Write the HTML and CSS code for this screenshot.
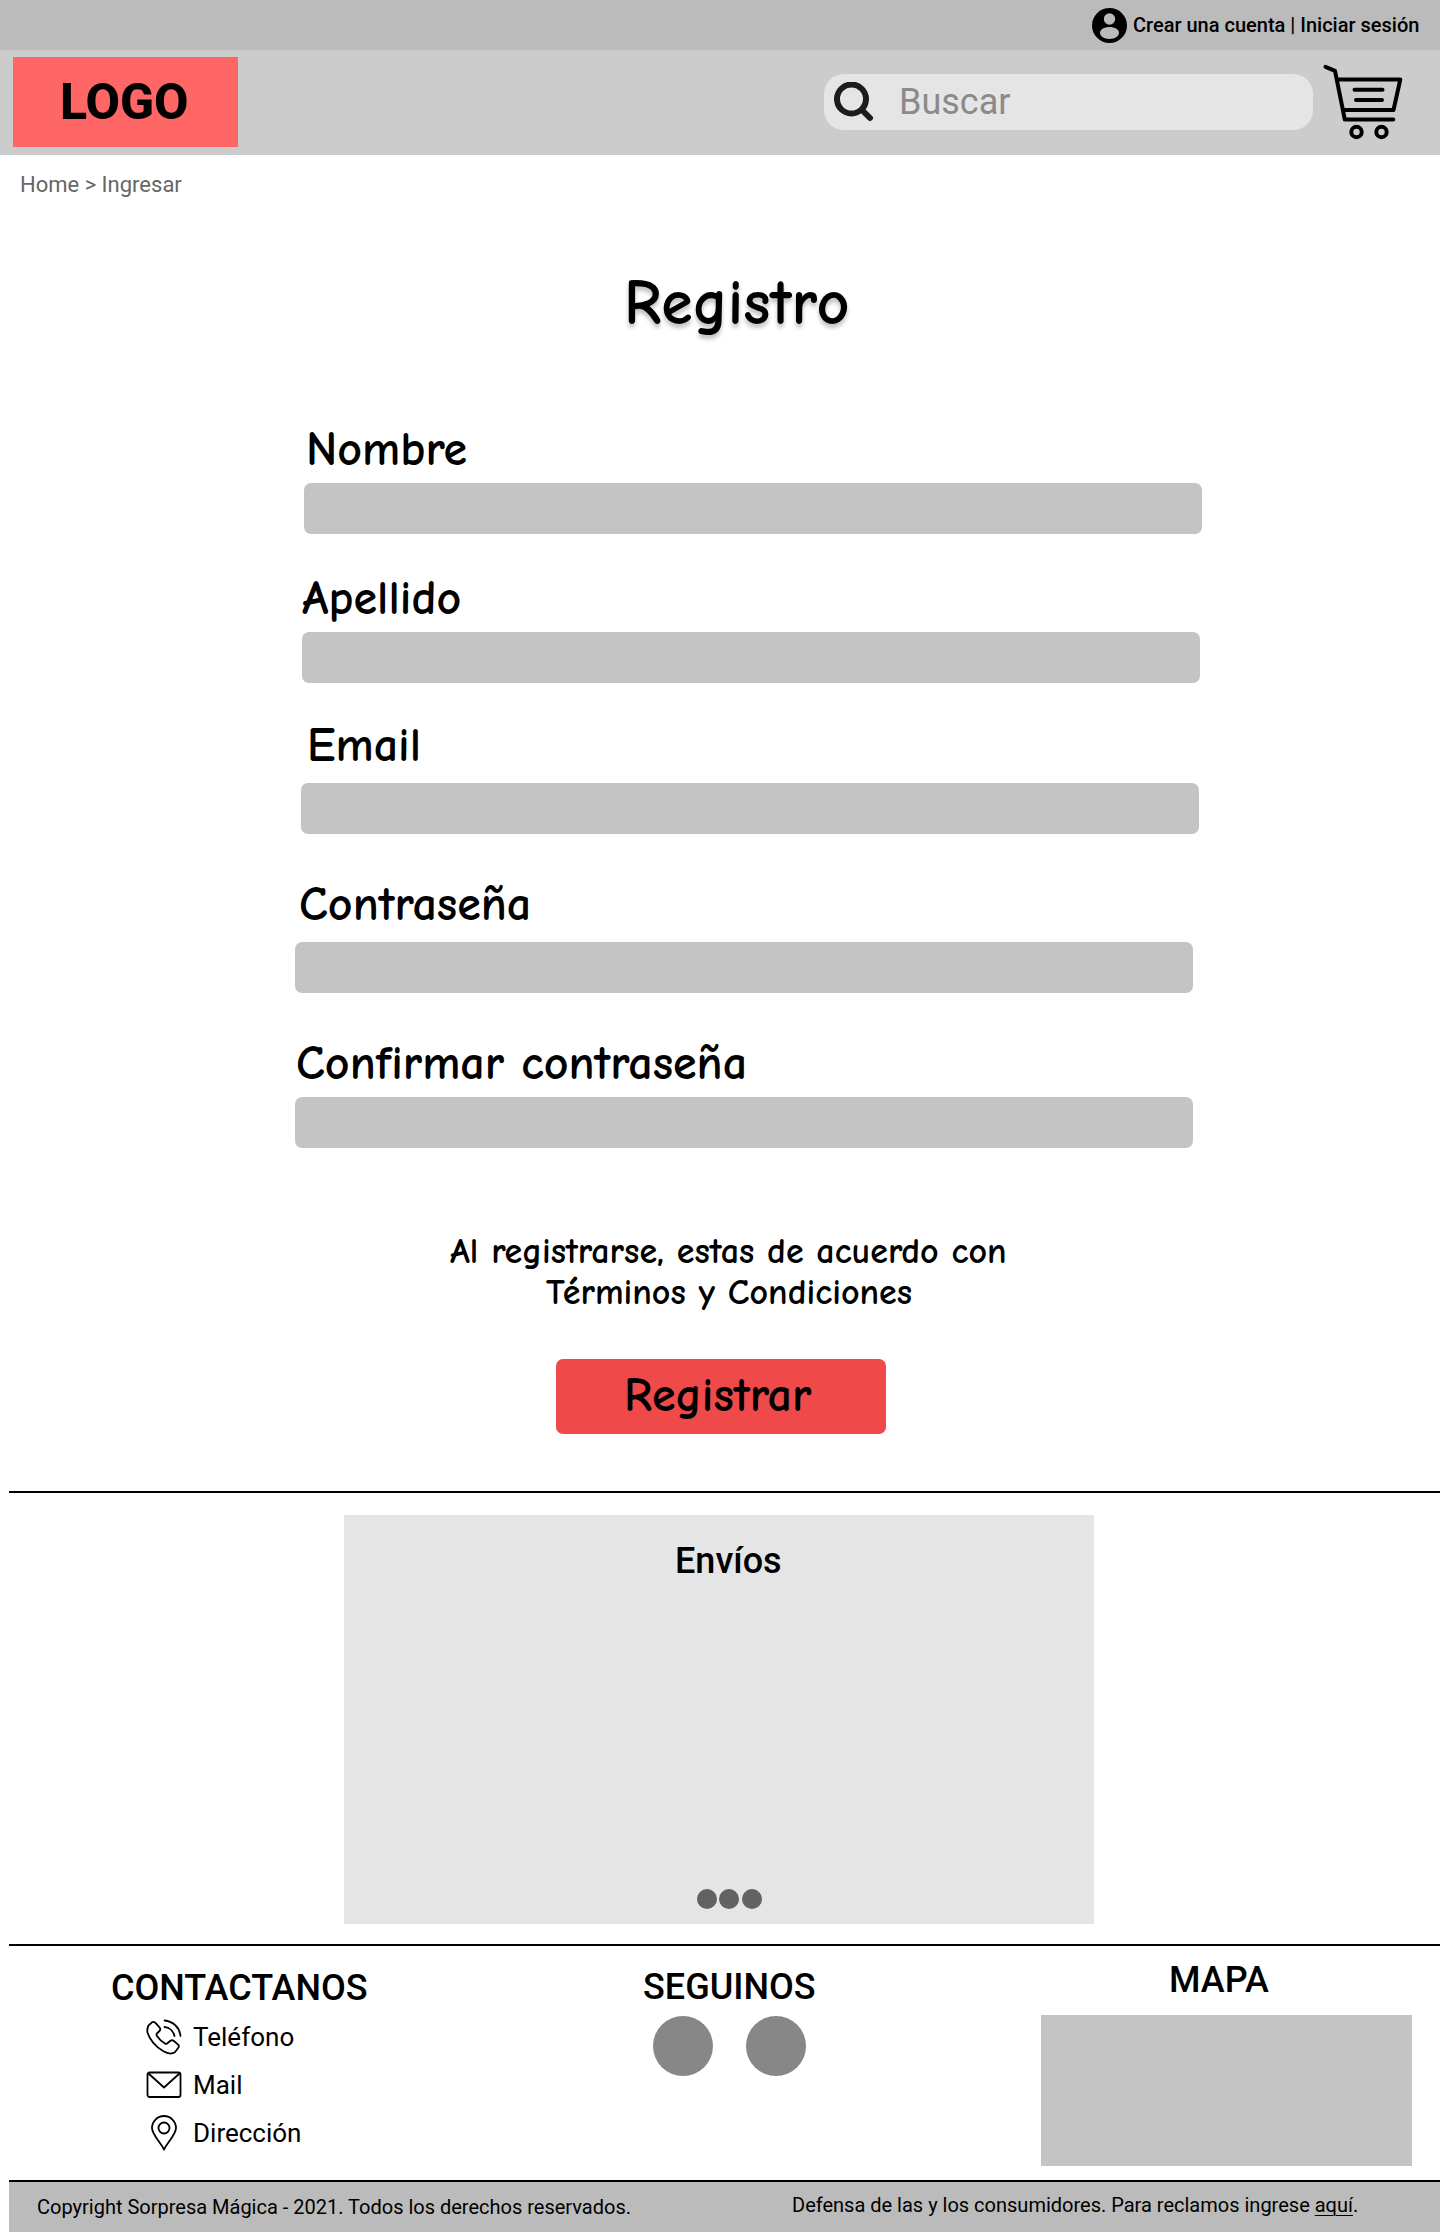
FILE: index.html
```html
<!DOCTYPE html>
<html lang="es">
<head>
<meta charset="utf-8">
<title>Registro</title>
<link rel="stylesheet" href="styles.css">
</head>
<body>
<div class="topbar">
  <svg class="account" viewBox="0 0 35 35"><circle cx="17.5" cy="17.5" r="17.5"/><circle class="cut" cx="17.5" cy="11" r="5.7"/><path class="cut" d="M8 24.8c0-3.4 4.300-5.800 9.500-5.800s9.500 2.400 9.500 5.800c0 3.400-4.300 6.200-9.500 6.200s-9.500-2.800-9.500-6.200z"/></svg>
  <span class="session">Crear una cuenta | Iniciar sesión</span>
</div>
<header class="header">
  <div class="logo"><span class="logo-text">LOGO</span></div>
  <div class="search">
    <svg class="search-icon" viewBox="0 0 40 40"><circle cx="17.500" cy="17" r="14.500"/><path d="M28 28l8 8"/></svg>
    <span class="search-text">Buscar</span>
  </div>
  <svg class="cart" viewBox="0 0 84 78"><path d="M4.500 3.800l9.500 4 9.800 48.700h48.500M16.500 16.500h62.800l-6.800 30.500H22.500M33.500 26.800h28M35 37h26"/><circle cx="35.500" cy="69" r="5.200"/><circle cx="60.500" cy="69" r="5.200"/></svg>
</header>
<nav class="crumbs">Home &gt; Ingresar</nav>
<main class="register">
  <h1 class="title hand">Registro</h1>
  <form class="form">
    <div class="field f-name"><label class="hand">Nombre</label><div class="input"></div></div>
    <div class="field f-last"><label class="hand">Apellido</label><div class="input"></div></div>
    <div class="field f-mail"><label class="hand">Email</label><div class="input"></div></div>
    <div class="field f-pass"><label class="hand">Contraseña</label><div class="input"></div></div>
    <div class="field f-conf"><label class="hand">Confirmar contraseña</label><div class="input"></div></div>
  </form>
  <p class="terms hand"><span class="t1">Al registrarse, estas de acuerdo con</span><span class="t2">Términos y Condiciones</span></p>
  <div class="button hand"><span class="button-text">Registrar</span></div>
</main>
<section class="shipping">
  <div class="slide">
    <h2 class="heading">Envíos</h2>
    <div class="dots"><i></i><i></i><i></i></div>
  </div>
</section>
<footer class="footer">
  <section class="contact">
    <h2 class="heading">CONTACTANOS</h2>
    <ul class="contact-list">
      <li><svg viewBox="0 0 36 36"><path d="M2.500 6.500L6 3.300q1.700-1 3.200.4l4.500 5q1.300 1.800-.2 3.300l-2.600 2.500q-.8 1.200.1 2.400 3.400 5 8 7.600 1.300.8 2.400-.2l3-2.600q1.600-1 3.200.1l4.500 3.800q1.400 1.500.2 3.200l-3.400 4.500q-4.500 3-11.500-1C9.500 27.500 3.500 20 1.500 13.500Q.9 9.500 2.500 6.500zM18.500 1.500C27 2.500 33.500 8 34.500 17M18.500 8c5 .5 9 4 10 9"/></svg>Teléfono</li>
      <li><svg viewBox="0 0 36 36"><rect x="1.500" y="5.500" width="33" height="24.500" rx="2"/><path d="M2.500 6.500L18 20.500 33.500 6.500"/></svg>Mail</li>
      <li><svg viewBox="0 0 36 36"><path d="M18 34.500C15 28 6 19.500 6 13a12 12 0 0 1 24 0c0 6.500-9 15-12 21.500z"/><circle cx="18" cy="13" r="5.500"/></svg>Dirección</li>
    </ul>
  </section>
  <section class="follow">
    <h2 class="heading">SEGUINOS</h2>
    <div class="networks"><i></i><i></i></div>
  </section>
  <section class="map">
    <h2 class="heading">MAPA</h2>
    <div class="map-box"></div>
  </section>
</footer>
<div class="legal">
  <span class="copy">Copyright Sorpresa Mágica - 2021. Todos los derechos reservados.</span>
  <span class="claims">Defensa de las y los consumidores. Para reclamos ingrese <u>aquí</u>.</span>
</div>
</body>
</html>
```
FILE: styles.css
```css
* { box-sizing: border-box; }
body { margin: 0; width: 1440px; height: 2232px; background: #fff; color: #000; font-family: Roboto, "Liberation Sans", sans-serif; white-space: nowrap; overflow: hidden; }
h1, h2, p, ul { margin: 0; padding: 0; }
svg { display: block; flex: none; }
.hand { font-family: "Comic Neue", Inter, sans-serif; font-feature-settings: "cv11"; font-weight: 700; }

.topbar { height: 50px; background: #bbb; display: flex; align-items: center; padding-left: 1092px; gap: 6px; }
.account { width: 35px; height: 35px; }
.account .cut { fill: #bbb; }
.session { font-size: 20px; font-weight: 500; line-height: 50px; }

.header { height: 105px; background: #ccc; display: flex; align-items: flex-start; }
.logo { width: 225px; height: 90px; margin: 7px 0 0 13px; background: #f66; padding-left: 47px; }
.logo-text { font-size: 50px; font-weight: 800; line-height: 90px; }
.search { width: 489px; height: 56px; margin: 24px 0 0 586px; border-radius: 20px; background: #e5e5e5; display: flex; padding-left: 10px; }
.search-icon { width: 40px; height: 40px; margin-top: 8px; fill: none; stroke: #1c1c1c; stroke-width: 6; stroke-linecap: round; }
.search-text { margin-left: 25px; font-size: 36px; line-height: 56px; color: #8a8a8a; }
.cart { width: 84px; height: 78px; margin: 13px 0 0 8px; fill: none; stroke: #000; stroke-width: 4; stroke-linecap: round; stroke-linejoin: round; }

.crumbs { height: 60px; padding-left: 20px; font-size: 22px; line-height: 60px; color: #666; }

.register { height: 1276px; padding-top: 54px; }
.title { width: max-content; margin-left: 624px; height: 70px; line-height: 68px; font-size: 64px; text-shadow: 0 4px 4px rgba(0,0,0,.25); }
.form { padding-top: 77px; }
.field { width: 898px; }
.field label { display: block; height: 67px; line-height: 67px; font-size: 48px; }
.input { height: 51px; border-radius: 7px; background: #c4c4c4; }
.f-name { margin-left: 304px; }
.f-last { margin: 31px 0 0 302px; }
.f-mail { margin: 33px 0 0 301px; }
.f-pass { margin: 41px 0 0 295px; }
.f-conf { margin: 37px 0 0 295px; }
.f-name label { padding-left: 2px; }
.f-mail label { padding-left: 6px; line-height: 59px; }
.f-pass label { padding-left: 4px; line-height: 60px; }
.f-conf label { padding-left: 1px; }
.terms { display: flex; flex-direction: column; padding-top: 83px; font-size: 36px; line-height: 41px; }
.t1 { margin-left: 450px; }
.t2 { margin-left: 546px; }
.button { width: 330px; height: 75px; margin: 46px 0 0 556px; padding-left: 68px; border-radius: 7px; background: #ef4949; font-size: 48px; line-height: 74px; }

.shipping { height: 453px; margin-left: 9px; border-top: 2px solid #000; padding: 22px 0 0 335px; }
.slide { width: 750px; height: 409px; background: #e5e5e5; display: flex; flex-direction: column; justify-content: space-between; padding: 24px 0 15px; }
.heading { font-size: 36px; font-weight: 500; line-height: 44px; }
.slide .heading { padding-left: 331px; }
.dots { display: flex; padding-left: 353px; }
.dots i { width: 20px; height: 20px; border-radius: 50%; background: #626262; }
.dots i + i { margin-left: 2px; }
.dots i + i + i { margin-left: 3px; }

.footer { height: 236px; margin-left: 9px; border-top: 2px solid #000; display: flex; }
.contact { width: 634px; padding: 20px 0 0 102px; }
.contact-list { list-style: none; padding: 3px 0 0 35px; }
.contact-list li { display: flex; align-items: center; height: 48px; gap: 11px; font-size: 26px; }
.contact-list svg { width: 36px; height: 36px; fill: none; stroke: #000; stroke-width: 1.8; stroke-linecap: round; stroke-linejoin: round; }
.follow { width: 389px; padding-top: 19px; }
.networks { display: flex; gap: 33px; padding: 7px 0 0 10px; }
.networks i { width: 60px; height: 60px; border-radius: 50%; background: #878787; }
.map { padding: 12px 0 0 9px; }
.map .heading { padding-left: 128px; }
.map-box { width: 371px; height: 151px; margin-top: 13px; background: #c4c4c4; }

.legal { height: 52px; margin-left: 9px; border-top: 2px solid #000; background: #bbb; display: flex; font-size: 20px; }
.copy { width: 783px; padding-left: 28px; line-height: 50px; }
.claims { line-height: 46px; }
.claims u { text-underline-offset: 3px; text-decoration-thickness: 1px; }
```
